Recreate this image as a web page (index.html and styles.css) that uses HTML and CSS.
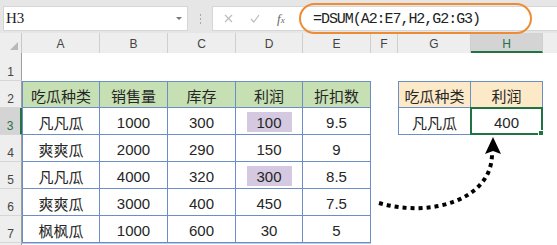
FILE: index.html
```html
<!DOCTYPE html>
<html lang="zh-CN">
<head>
<meta charset="utf-8">
<title>DSUM</title>
<link rel="stylesheet" href="styles.css">
</head>
<body>
<div class="app">
  <div class="toolbar">
    <div class="namebox"><span class="name">H3</span><span class="dd"></span></div>
    <div class="sep"><i></i><i></i><i></i></div>
    <div class="fbar">
      <svg class="ico ico-x" width="9" height="9" viewBox="0 0 9 9"><path d="M1 1L8 8M8 1L1 8" stroke="#bdbdbd" stroke-width="1.2" fill="none"/></svg>
      <svg class="ico ico-ok" width="10" height="9" viewBox="0 0 10 9"><path d="M1 5L3.8 8L9 1" stroke="#bdbdbd" stroke-width="1.2" fill="none"/></svg>
      <span class="fx">f<small>x</small></span>
      <div class="formula">=DSUM(A2:E7,H2,G2:G3)</div>
    </div>
    <div class="ring"></div>
  </div>

  <div class="sheet">
    <!-- column headers -->
    <div class="corner"><span class="tri"></span></div>
    <div class="ch">A</div><div class="ch">B</div><div class="ch">C</div><div class="ch">D</div>
    <div class="ch">E</div><div class="ch">F</div><div class="ch">G</div><div class="ch ch-sel">H</div><div class="ch ch-rest"></div>

    <!-- row 1 -->
    <div class="rh">1</div>
    <div class="c"></div><div class="c"></div><div class="c"></div><div class="c"></div><div class="c"></div><div class="c"></div><div class="c"></div><div class="c"></div><div class="c"></div>

    <!-- row 2 -->
    <div class="rh">2</div>
    <div class="c t t-top t-left hg">吃瓜种类</div>
    <div class="c t t-top hg">销售量</div>
    <div class="c t t-top hg">库存</div>
    <div class="c t t-top hg">利润</div>
    <div class="c t t-top hg">折扣数</div>
    <div class="c"></div>
    <div class="c t t-top t-left ho">吃瓜种类</div>
    <div class="c t t-top ho">利润</div>
    <div class="c"></div>

    <!-- row 3 -->
    <div class="rh rh-sel">3</div>
    <div class="c t t-left">凡凡瓜</div>
    <div class="c t">1000</div>
    <div class="c t">300</div>
    <div class="c t"><span class="mark">100</span></div>
    <div class="c t">9.5</div>
    <div class="c"></div>
    <div class="c t t-left">凡凡瓜</div>
    <div class="c t sel">400</div>
    <div class="c"></div>

    <!-- row 4 -->
    <div class="rh">4</div>
    <div class="c t t-left">爽爽瓜</div>
    <div class="c t">2000</div>
    <div class="c t">290</div>
    <div class="c t">150</div>
    <div class="c t">9</div>
    <div class="c"></div><div class="c"></div><div class="c"></div><div class="c"></div>

    <!-- row 5 -->
    <div class="rh">5</div>
    <div class="c t t-left">凡凡瓜</div>
    <div class="c t">4000</div>
    <div class="c t">320</div>
    <div class="c t"><span class="mark">300</span></div>
    <div class="c t">8.5</div>
    <div class="c"></div><div class="c"></div><div class="c"></div><div class="c"></div>

    <!-- row 6 -->
    <div class="rh">6</div>
    <div class="c t t-left">爽爽瓜</div>
    <div class="c t">3000</div>
    <div class="c t">400</div>
    <div class="c t">450</div>
    <div class="c t">7.5</div>
    <div class="c"></div><div class="c"></div><div class="c"></div><div class="c"></div>

    <!-- row 7 -->
    <div class="rh">7</div>
    <div class="c t t-left">枫枫瓜</div>
    <div class="c t">1000</div>
    <div class="c t">600</div>
    <div class="c t">30</div>
    <div class="c t">5</div>
    <div class="c"></div><div class="c"></div><div class="c"></div><div class="c"></div>

    <!-- row 8 (only its top edge is visible) -->
    <div class="rh"></div>
    <div class="c c-edge"></div><div class="c c-edge"></div><div class="c c-edge"></div><div class="c c-edge"></div><div class="c c-edge"></div><div class="c"></div><div class="c"></div><div class="c"></div><div class="c"></div>
  </div>

  <svg class="arrow" width="557" height="245" viewBox="0 0 557 245">
    <path d="M379 203 C430 218 492 200 492 154" fill="none" stroke="#000" stroke-width="4" stroke-dasharray="4 4"/>
    <polygon points="493,137 485,154 493,151 501,154" fill="#000"/>
  </svg>
</div>
</body>
</html>
```

FILE: styles.css
```css
* { box-sizing: border-box; }

html, body {
  margin: 0;
  padding: 0;
  background: #ffffff;
}

.app {
  position: relative;
  width: 557px;
  height: 245px;
  overflow: hidden;
  font-family: "Liberation Sans", "Noto Sans CJK SC", sans-serif;
  color: #262626;
}

/* ---------- formula toolbar ---------- */
.toolbar {
  position: relative;
  height: 33px;
  background: #e6e6e6;
  display: flex;
  align-items: flex-start;
  padding-top: 6px;
}

.namebox {
  margin-left: 3px;
  width: 185px;
  height: 25px;
  background: #ffffff;
  border: 1px solid #d6d6d6;
  display: flex;
  align-items: center;
  justify-content: space-between;
  padding: 0 5px 0 2px;
}

.name {
  font-family: "Liberation Serif", serif;
  font-size: 15px;
  color: #222;
}

.dd {
  width: 0;
  height: 0;
  border-left: 3px solid transparent;
  border-right: 3px solid transparent;
  border-top: 3px solid #777;
}

.sep {
  width: 24px;
  height: 25px;
  display: flex;
  flex-direction: column;
  align-items: center;
  justify-content: center;
  gap: 2px;
}

.sep i {
  display: block;
  width: 1px;
  height: 2px;
  background: #a8a8a8;
}

.fbar {
  flex: 1;
  height: 25px;
  background: #ffffff;
  border: 1px solid #d6d6d6;
  border-right: none;
  display: flex;
  align-items: center;
  padding-left: 11px;
}

.ico-x { margin-right: 17px; }
.ico-ok { margin-right: 17px; }

.fx {
  font-family: "Liberation Serif", serif;
  font-style: italic;
  font-size: 13px;
  color: #666;
  width: 36px;
}

.fx small { font-size: 9px; }

.formula {
  font-family: "Liberation Mono", monospace;
  font-size: 15px;
  letter-spacing: -1.05px;
  color: #222;
  padding-top: 2px;
}

.ring {
  position: absolute;
  left: 299px;
  top: 3px;
  width: 233px;
  height: 31px;
  border: 2px solid #ee8c34;
  border-radius: 16px;
}

/* ---------- sheet grid ---------- */
.sheet {
  display: grid;
  grid-template-columns: 22px 78px 68px 68px 67px 68px 27px 73px 72px 1fr;
  grid-template-rows: 20px 28px;
  grid-auto-rows: 27px;
}

.corner {
  background: #eeeeee;
  border-right: 1px solid #c8c8c8;
  position: relative;
}

.tri {
  position: absolute;
  right: 3px;
  bottom: 3px;
  width: 0;
  height: 0;
  border-left: 8px solid transparent;
  border-bottom: 8px solid #b9b9b9;
}

.ch {
  background: #eeeeee;
  border-right: 1px solid #cfcfcf;
  font-size: 12px;
  color: #444;
  display: flex;
  align-items: flex-end;
  justify-content: center;
  padding-bottom: 2px;
}

.ch-rest { border-right: none; }

.ch-sel {
  background: #d4d4d4;
  color: #217346;
  border-bottom: 2px solid #217346;
  padding-bottom: 0;
}

.rh {
  background: #eeeeee;
  border-right: 1px solid #9e9e9e;
  border-bottom: 1px solid #d6d6d6;
  font-size: 12px;
  color: #444;
  display: flex;
  align-items: flex-end;
  justify-content: center;
  padding-bottom: 1px;
}

.rh-sel {
  background: #d4d4d4;
  color: #217346;
  border-right: 2px solid #217346;
}

.c {
  background: #ffffff;
  font-size: 15px;
  display: flex;
  align-items: center;
  justify-content: center;
  padding-top: 2px;
  position: relative;
}

.c-edge { border-top: 1px solid #b9cbe6; }

.t {
  border-right: 1px solid #6b8ec6;
  border-bottom: 1px solid #6b8ec6;
}

.t-top { border-top: 1px solid #6b8ec6; }
.t-left { border-left: 1px solid #6b8ec6; }

.hg { background: #c6e0b4; }
.ho { background: #fce9c8; }

.mark {
  display: inline-flex;
  align-items: center;
  justify-content: center;
  width: 45px;
  height: 20px;
  background: #d4c9e0;
}

.sel::before {
  content: "";
  position: absolute;
  left: -1px;
  top: -1px;
  right: -1px;
  bottom: -1px;
  border: 2px solid #217346;
}

.sel::after {
  content: "";
  position: absolute;
  right: -4px;
  bottom: -4px;
  width: 6px;
  height: 6px;
  background: #217346;
  border: 1px solid #ffffff;
}

/* ---------- annotation arrow ---------- */
.arrow {
  position: absolute;
  left: 0;
  top: 0;
  pointer-events: none;
}
```
